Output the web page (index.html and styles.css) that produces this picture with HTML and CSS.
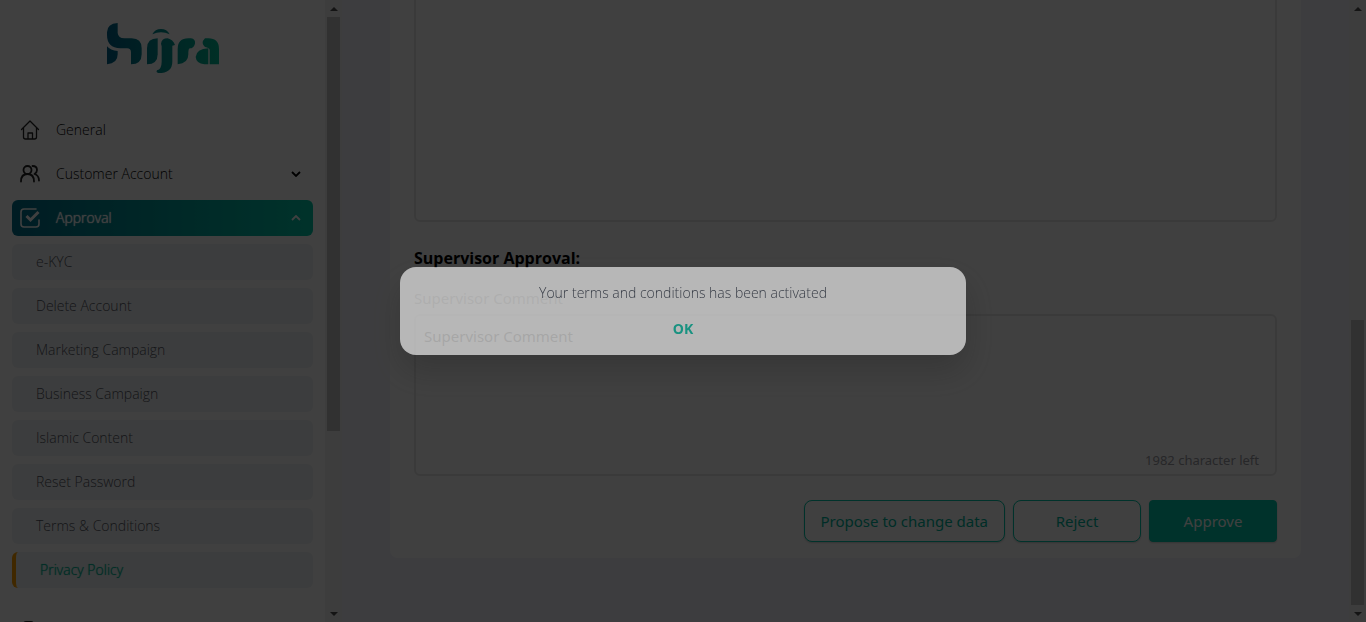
FILE: index.html
```html
<!DOCTYPE html>
<html lang="en">
<head>
<meta charset="utf-8">
<title>Hijra - Privacy Policy</title>
<link rel="stylesheet" href="styles.css">
</head>
<body>
<div class="app">
  <aside class="sidebar">
    <div class="sidebar-content">
      <svg class="logo" viewBox="0 0 336 150" role="img" aria-label="hijra">
        <defs><linearGradient id="brand" gradientUnits="userSpaceOnUse" x1="0" y1="0" x2="336" y2="0"><stop offset="0" stop-color="#00648a"/><stop offset="1" stop-color="#00bc96"/></linearGradient></defs>
        <g fill="url(#brand)">
          <path d="M32 0V30Q34 46 52 46H74Q104 46 104 76V94Q104 124 72 124V88Q72 76 60 76H40Q0 74 0 36V28Q0 2 32 0Z"/>
          <path d="M0 70Q10 82 32 84V94Q32 122 0 124Z"/>
          <path d="M152 46V94Q152 124 120 124V76Q120 46 152 46Z"/>
          <path d="M136 34Q144 18 162 18T188 34Q162 22 136 34Z"/>
          <path d="M162 62Q164 46 182 46Q198 50 204 66L196 68V116Q196 150 154 150Q146 148 150 142Q164 138 164 116V70Z"/>
          <path d="M212 124V78Q212 46 244 46H252Q266 48 264 62Q260 76 248 76Q244 78 244 88V94Q244 122 212 124Z"/>
          <path d="M294 46H304Q336 46 336 78V124H308V82Q308 74 294 72Q280 60 294 46Z"/>
          <path d="M304 76V124H292Q268 122 266 102Q268 78 304 76Z"/>
        </g>
      </svg>
      <nav class="menu">
        <a class="item" href="#"><svg class="icon" viewBox="0 0 20 20"><path d="M1.500 9.500 10 1l8.500 8.500M3.500 8v9q0 2 2 2h9q2 0 2-2V8M8 19v-6h4.500v6"/></svg>General</a>
        <a class="item" href="#"><svg class="icon heavy" viewBox="0 0 20 20"><circle cx="7.500" cy="6" r="4"/><path d="M1 17.500q0-7.500 6.500-7.500t6.500 7.500M12.500 2q4.500 0 4.500 4 0 2.500-2.500 4 4.500 1.500 4.500 6.500"/></svg>Customer Account<svg class="chevron" viewBox="0 0 10 6"><path d="M1 1l4 4 4-4"/></svg></a>
        <a class="item active" href="#"><svg class="icon" viewBox="0 0 20 20"><path d="M16 1H4Q1 1 1 4v12q0 3 3 3h12q3 0 3-3v-4"/><path class="tick" d="M6.500 8l4 4 8-8"/></svg>Approval<svg class="chevron" viewBox="0 0 10 6"><path d="M1 5l4-4 4 4"/></svg></a>
        <div class="submenu">
          <a class="sub" href="#">e-KYC</a>
          <a class="sub" href="#">Delete Account</a>
          <a class="sub" href="#">Marketing Campaign</a>
          <a class="sub" href="#">Business Campaign</a>
          <a class="sub" href="#">Islamic Content</a>
          <a class="sub" href="#">Reset Password</a>
          <a class="sub" href="#">Terms &amp; Conditions</a>
          <a class="sub current" href="#">Privacy Policy</a>
        </div>
        <a class="item last" href="#" aria-label="Reports"><svg class="icon heavy" viewBox="0 0 20 20"><path d="M4 19V4q0-2 2-2h5q2 0 2 2v15z"/></svg></a>
      </nav>
    </div>
    <div class="scrollbar" aria-hidden="true">
      <span class="arrow up"></span>
      <span class="track"><span class="thumb thumb-menu"></span></span>
      <span class="arrow down"></span>
    </div>
  </aside>
  <main class="main">
    <section class="card">
      <textarea class="box content-box" aria-label="Content" readonly></textarea>
      <h2 class="heading">Supervisor Approval:</h2>
      <label class="label" for="comment">Supervisor Comment</label>
      <div class="comment">
        <textarea class="box comment-box" id="comment">Supervisor Comment</textarea>
        <span class="counter">1982 character left</span>
      </div>
      <div class="actions">
        <button class="btn" type="button">Propose to change data</button>
        <button class="btn" type="button">Reject</button>
        <button class="btn primary" type="button">Approve</button>
      </div>
    </section>
  </main>
  <div class="scrollbar" aria-hidden="true">
    <span class="arrow up"></span>
    <span class="track end"><span class="thumb thumb-page"></span></span>
    <span class="arrow down"></span>
  </div>
</div>
<div class="overlay">
  <div class="dialog" role="dialog" aria-label="Status">
    <p class="message">Your terms and conditions has been activated</p>
    <button class="ok" type="button">OK</button>
  </div>
</div>
</body>
</html>
```
FILE: styles.css
```css
* { box-sizing: border-box; }
body { margin: 0; font-family: "Open Sans", "Noto Sans", sans-serif; font-size: 16px; line-height: 24px; }
button, textarea { font: inherit; }
.app { display: flex; height: 100vh; overflow: hidden; background: #f4f4fb; }

.sidebar { display: flex; flex: none; width: 342px; background: #fff; }
.sidebar-content { display: flex; flex: 1; flex-direction: column; gap: 39px; padding: 23px 12px 0; overflow: hidden; }
.logo { flex: none; align-self: center; width: 112px; height: 50px; }
.menu { display: flex; flex-direction: column; gap: 8px; font-size: 14px; font-weight: 300; line-height: 20px; }
.item { display: flex; flex: none; align-items: center; gap: 16px; height: 36px; padding: 0 12px 0 8px; border-radius: 6px; color: #000; text-decoration: none; }
.icon { width: 20px; height: 20px; fill: none; stroke: #222; stroke-width: 1.3; stroke-linecap: round; stroke-linejoin: round; overflow: visible; }
.heavy { stroke-width: 1.8; }
.chevron { width: 10px; height: 6px; margin-left: auto; fill: none; stroke: currentColor; stroke-width: 1.8; }
.active { color: #fff; background: linear-gradient(90deg, #00708c, #00c8a8); text-shadow: 0 0 1px #fff, 0 0 1px #fff; }
.active .icon { stroke: #fff; stroke-width: 1.6; }
.active .tick { stroke-width: 3; stroke-linecap: butt; stroke-linejoin: miter; }
.submenu { display: flex; flex-direction: column; gap: 8px; }
.sub { height: 36px; padding: 8px 24px; border-radius: 6px; color: #505560; background: #f0f2f5; text-decoration: none; }
.current { border-left: 4px solid #ffa000; color: #00b496; text-shadow: 0 0 1px #00b496; }
.last { margin-top: 16px; }

.scrollbar { display: flex; flex: none; flex-direction: column; align-items: center; width: 17px; background: #f1f1f1; }
.arrow { display: flex; justify-content: center; align-items: center; height: 17px; }
.arrow::before { content: ""; border: 4px solid transparent; }
.up::before { border-top: 0; border-bottom-color: #505050; }
.down::before { border-bottom: 0; border-top-color: #505050; }
.track { display: flex; flex: 1; flex-direction: column; width: 13px; }
.end { justify-content: flex-end; }
.thumb { background: #c1c1c1; }
.thumb-menu { height: 70.400%; }
.thumb-page { height: 48.500%; }

.main { display: flex; flex: 1; flex-direction: column; justify-content: flex-end; padding: 0 48px 64px; overflow: hidden; }
.card { display: flex; flex: none; flex-direction: column; padding: 24px 24px 16px; border-radius: 8px; background: #fff; font-family: "Noto Sans", sans-serif; font-size: 15px; }
.box { display: block; width: 100%; padding: 8px; border: 2px solid #e8e8e8; border-radius: 6px; color: #505050; background: #fff; resize: none; }
.content-box { height: 400px; }
.heading { margin: 24px 0 16px; font-family: "Open Sans", sans-serif; font-size: 16px; font-weight: 700; line-height: 24px; color: #000; }
.label { margin-bottom: 4px; color: #a0a0a0; }
.comment { position: relative; }
.comment-box { height: 162px; }
.counter { position: absolute; right: 18px; bottom: 6px; font-size: 13px; line-height: 20px; color: #9a9aa2; }
.actions { display: flex; justify-content: flex-end; gap: 8px; margin-top: 24px; }
.btn { min-width: 128px; height: 42px; padding: 0 16px; border: 1px solid #00c8aa; border-radius: 8px; color: #00b49a; background: #fff; box-shadow: 0 1px 2px rgba(0, 0, 0, .2); }
.primary { border-radius: 4px; color: #fff; background: #00c8aa; }

.overlay { position: fixed; inset: 0; display: flex; align-items: center; justify-content: center; background: rgba(0, 0, 0, .75); }
.dialog { display: flex; flex-direction: column; align-items: center; gap: 16px; width: 100%; max-width: 566px; padding: 16px; border-radius: 16px; background: #fff; opacity: .62; box-shadow: 0 16px 32px rgba(0, 0, 0, .25); font-size: 14px; line-height: 20px; }
.message { margin: 0; font-weight: 300; color: #303848; }
.ok { padding: 0 8px; border: 0; background: none; color: #00c4a8; font-weight: 700; line-height: 20px; }
```
